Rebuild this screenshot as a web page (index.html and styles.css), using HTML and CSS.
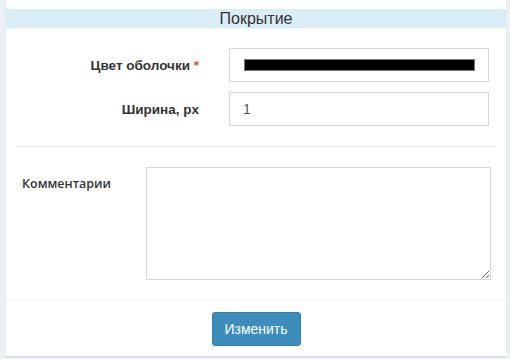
FILE: index.html
```
<!DOCTYPE html>
<html lang="ru">
  <head>
    <meta charset="UTF-8" />
    <meta name="viewport" content="width=device-width, initial-scale=1.0" />
    <title>Покрытие</title>
    <link rel="stylesheet" href="styles.css">
  </head>
  <body>
    <div class="box">
      <h3 class="box-title">Покрытие</h3>
      <form class="box-body">
        <div class="form-row">
          <label class="form-label" for="shellColor">Цвет оболочки <span class="required">*</span></label>
          <div class="form-control color-control" id="shellColor">
            <div class="color-swatch"></div>
          </div>
        </div>
        <div class="form-row">
          <label class="form-label" for="width">Ширина, px</label>
          <input class="form-control" type="text" id="width" value="1" />
        </div>
        <hr class="divider" />
        <div class="comment-row">
          <label class="comment-label" for="comment">Комментарии</label>
          <textarea class="form-control comment-input" id="comment"></textarea>
        </div>
      </form>
      <div class="box-footer">
        <button type="button" class="btn-primary">Изменить</button>
      </div>
    </div>
  </body>
</html>
```

FILE: styles.css
```
body {
  margin: 0;
  padding: 0 4px 0 6px;
  background-color: #ecf0f5;
  font-family: Arial, 'Liberation Sans', sans-serif;
  color: #333;
  height: 359px;
  box-sizing: border-box;
  overflow: hidden;
}
.box {
  width: 500px;
  background-color: #fff;
  padding-top: 9px;
  box-shadow: 0 1px 1px rgba(0, 0, 0, 0.1);
}
.box-title {
  margin: 0;
  height: 19px;
  line-height: 19px;
  background-color: #d9edf7;
  font-size: 16px;
  font-weight: normal;
  text-align: center;
  color: #333;
}
.box-body {
  padding: 20px 0;
  margin: 0;
}
.form-row {
  display: grid;
  grid-template-columns: 193px 260px;
  column-gap: 30px;
  align-items: center;
  margin-bottom: 10px;
}
.form-label {
  text-align: right;
  font-family: Arial, 'Liberation Sans', sans-serif;
  font-size: 13.5px;
  font-weight: bold;
  color: #333;
}
.required {
  color: #dd4b39;
}
.form-control {
  display: block;
  height: 34px;
  margin: 0;
  padding: 6px 13px;
  font-family: Arial, 'Liberation Sans', sans-serif;
  font-size: 14px;
  color: #555;
  border: 1px solid #d2d6de;
  border-radius: 0;
  background-color: #fff;
  box-sizing: border-box;
  outline: none;
}
.color-control {
  padding: 10px 13px 10px 14px;
}
.color-swatch {
  height: 12px;
  background-color: #000;
  border: 1px solid #777;
  box-sizing: border-box;
}
.divider {
  margin: 20px 10px;
  border: 0;
  border-top: 1px solid #eee;
}
.comment-row {
  display: flex;
  align-items: flex-start;
}
.comment-label {
  width: 124px;
  padding: 7px 0 0 16px;
  line-height: 20px;
  font-family: 'Open Sans', sans-serif;
  font-size: 12.5px;
  font-weight: 600;
  color: #333;
}
.comment-input {
  width: 345px;
  height: 113px;
  resize: both;
}
.box-footer {
  border-top: 1px solid #f4f4f4;
  padding: 11px 0 10px;
  text-align: center;
}
.btn-primary {
  width: 89px;
  height: 34px;
  background-color: #3c8dbc;
  border: 1px solid #367fa9;
  border-radius: 3px;
  color: #fff;
  font-family: Arial, 'Liberation Sans', sans-serif;
  font-size: 14px;
  cursor: pointer;
}
```
